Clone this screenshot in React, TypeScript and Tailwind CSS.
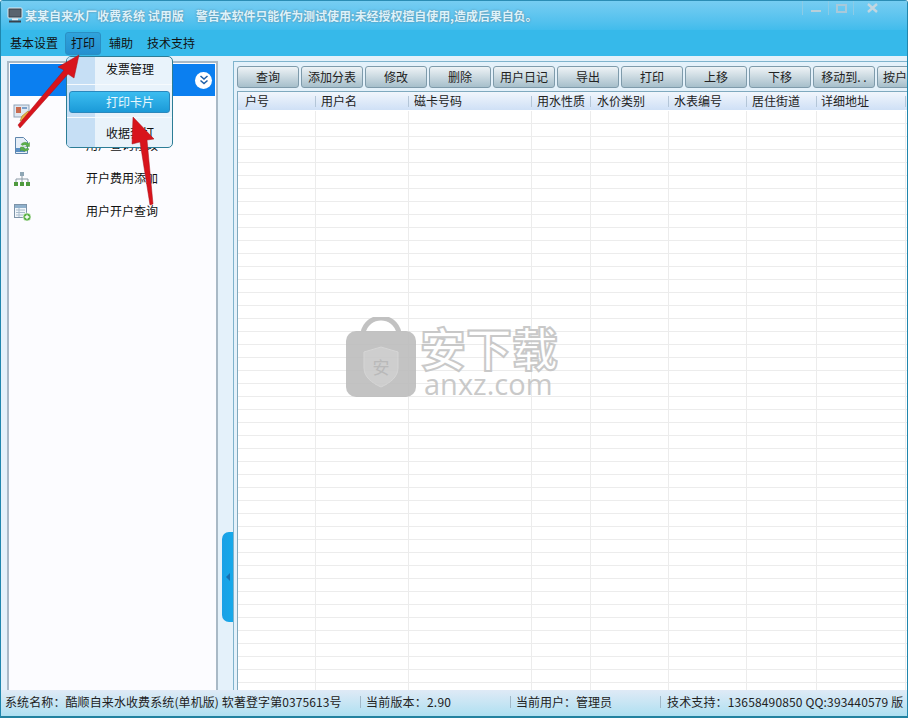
const font = { fontFamily: '"Noto Sans CJK SC", "Liberation Sans", sans-serif' };

const buttons = ["查询", "添加分表", "修改", "删除", "用户日记", "导出", "打印", "上移", "下移", "移动到. ."];
const cols = [
  { t: "户号", w: "w-[78px]", p: "pl-[7px]" },
  { t: "用户名", w: "w-[93px]", p: "pl-[5px]" },
  { t: "磁卡号码", w: "w-[123px]", p: "pl-[5px]" },
  { t: "用水性质", w: "w-[59px]", p: "pl-[5px]" },
  { t: "水价类别", w: "w-[78px]", p: "pl-[6px]" },
  { t: "水表编号", w: "w-[78px]", p: "pl-[5px]" },
  { t: "居住街道", w: "w-[70px]", p: "pl-[5px]" },
  { t: "详细地址", w: "w-[89px]", p: "pl-[4px]" },
];
const rows = Array.from({ length: 45 }, (_, i) => i);

function Icon1() {
  return (
    <svg width="20" height="20" viewBox="0 0 20 20">
      <rect x="2" y="2" width="15" height="12" fill="#dfe8f2" stroke="#8fa3b8" />
      <rect x="4" y="4" width="5" height="6" fill="#c96b4f" />
      <rect x="10" y="4" width="5" height="2" fill="#7da0c8" />
      <path d="M8 18l2-5 6-5 2 2-6 6z" fill="#e8b54a" stroke="#a57a24" strokeWidth="0.6" />
    </svg>
  );
}
function Icon2() {
  return (
    <svg width="20" height="20" viewBox="0 0 20 20">
      <path d="M3.500 1.500h8l4 4v12h-12z" fill="#e6eef7" stroke="#5f86ad" />
      <rect x="4" y="12" width="9" height="4" fill="#5a8fc4" />
      <path d="M9 8.500a4 3 0 0 1 7-1l1.500-1v4h-4l1.200-1a2.500 2 0 0 0-4 0z" fill="#5cb04a" stroke="#3d8a32" strokeWidth="0.4" />
      <path d="M17 13a4 3 0 0 1-7 1l-1.500 1v-4h4l-1.200 1a2.500 2 0 0 0 4 0z" fill="#5cb04a" stroke="#3d8a32" strokeWidth="0.4" />
    </svg>
  );
}
function Icon3() {
  return (
    <svg width="18" height="16" viewBox="0 0 18 16">
      <rect x="7" y="1" width="4" height="4" fill="#8fa6b5" />
      <path d="M9 5v3M3 11V8h12v3M9 8v3" fill="none" stroke="#8a9aa5" />
      <rect x="1" y="11" width="4" height="4" fill="#4f9a3e" />
      <rect x="7" y="11" width="4" height="4" fill="#4f9a3e" />
      <rect x="13" y="11" width="4" height="4" fill="#4f9a3e" />
    </svg>
  );
}
function Icon4() {
  return (
    <svg width="20" height="20" viewBox="0 0 20 20">
      <rect x="2.500" y="2.500" width="12" height="13" fill="#f2f6fa" stroke="#7d93a8" />
      <rect x="3" y="3" width="11" height="3" fill="#8fb0cc" />
      <path d="M4 8h9M4 10.500h9M4 13h9M7 6v9" stroke="#a9bccd" />
      <circle cx="15" cy="15" r="4" fill="#57b043" stroke="#fff" strokeWidth="0.6" />
      <path d="M15 12.800v4.400M12.800 15h4.400" stroke="#fff" strokeWidth="1.300" />
    </svg>
  );
}

function SideRow({ icon, text }: { icon: React.ReactNode; text: string }) {
  return (
    <div className="flex h-[33px] items-center">
      <div className="flex w-[24px] justify-center">{icon}</div>
      <span className="mb-[2px] ml-[52px] text-[12px] leading-none text-[#111]">{text}</span>
    </div>
  );
}

export default function App() {
  return (
    <div style={font} className="relative flex h-[718px] w-[908px] flex-col overflow-hidden rounded-t-[3px] border-x border-b-2 border-t border-x-[#1f86ad] border-b-[#22829f] border-t-[#2b8db5] bg-[#e4f1fa]">
      {/* title bar */}
      <div className="flex h-[29px] shrink-0 items-start justify-between bg-gradient-to-b from-[#76cdf2] to-[#41bcec]">
        <div className="flex items-center pl-[6px] pt-[6px]">
          <svg width="16" height="17" viewBox="0 0 16 17">
            <rect x="1" y="1" width="14" height="10" rx="1" fill="#39424c" stroke="#dfe8ee" />
            <rect x="2.500" y="2.500" width="11" height="7" fill="#59636e" />
            <rect x="5" y="11.500" width="6" height="2" fill="#e8edf2" />
            <rect x="2" y="13.500" width="12" height="2" fill="#39424c" />
          </svg>
          <span className="ml-[2px] whitespace-pre text-[12px] font-bold leading-none text-[#dcf2fb] [text-shadow:0_0_2px_#5a7d92]">
            某某自来水厂收费系统 试用版
          </span>
          <span className="ml-[12px] whitespace-pre text-[12px] font-bold leading-none tracking-[-0.07px] text-[#dcf2fb] [text-shadow:0_0_2px_#5a7d92]">
            警告本软件只能作为测试使用:未经授权擅自使用,造成后果自负。
          </span>
        </div>
        <div className="mr-[16px] flex h-[14px] items-center">
          <div className="flex h-full w-[26px] items-center justify-center border-l border-[#8ccbe6]">
            <div className="mt-[6px] h-[2px] w-[10px] bg-[#b9cfda]" />
          </div>
          <div className="flex h-full w-[25px] items-center justify-center border-l border-[#8ccbe6]">
            <div className="h-[9px] w-[11px] border-2 border-[#a8c9da]" />
          </div>
          <div className="flex h-full w-[38px] items-center justify-center border-l border-[#8ccbe6]">
            <svg width="11" height="10" viewBox="0 0 11 10">
              <path d="M1 1l9 8M10 1l-9 8" stroke="#c2d6e0" strokeWidth="2.400" />
            </svg>
          </div>
        </div>
      </div>

      {/* menu */}
      <div className="flex h-[26px] shrink-0 items-center bg-[#36b9ea] pl-[3px] text-[12px] leading-none text-[#111]">
        <span className="px-[6px]">基本设置</span>
        <span className="ml-[1px] flex h-[23px] w-[36px] items-center justify-center rounded-[3px] border border-[#2a8fc4] bg-gradient-to-b from-[#2fa3dc] to-[#2590d0]">打印</span>
        <span className="ml-[8px]">辅助</span>
        <span className="ml-[14px]">技术支持</span>
      </div>

      {/* body */}
      <div className="flex min-h-0 flex-1 pt-[5px]">
        {/* left panel */}
        <div className="ml-[6px] flex w-[211px] shrink-0 flex-col border-x-2 border-t-2 border-[#a9b9c6] bg-[#fcfcff] p-[1px] pb-0">
          <div className="flex h-[32px] shrink-0 items-center justify-end bg-[#0b7ff0] pr-[3px]">
            <div className="flex h-[17px] w-[17px] items-center justify-center rounded-full bg-white">
              <svg width="10" height="10" viewBox="0 0 10 10">
                <path d="M1.500 1l3.500 3 3.500-3M1.500 5.500l3.500 3 3.500-3" fill="none" stroke="#1d5fa8" strokeWidth="1.500" />
              </svg>
            </div>
          </div>
          <SideRow icon={<Icon1 />} text="用户开户添加" />
          <SideRow icon={<Icon2 />} text="用户查询修改" />
          <SideRow icon={<Icon3 />} text="开户费用添加" />
          <SideRow icon={<Icon4 />} text="用户开户查询" />
        </div>

        {/* splitter */}
        <div className="w-[15px] shrink-0 pl-[4px] pt-[471px]">
          <div className="flex h-[90px] w-[11px] items-center justify-center rounded-l-[7px] bg-gradient-to-r from-[#1ba0e6] to-[#16a9ea]">
            <div className="h-0 w-0 border-y-[4px] border-r-[4px] border-y-transparent border-r-[#1a6fb0]" />
          </div>
        </div>

        {/* right panel */}
        <div className="flex min-w-0 flex-1 flex-col overflow-hidden border-l border-t border-[#7fb3cc] pl-[3px] pt-[4px]">
          <div className="flex shrink-0 gap-[2px]">
            {buttons.map((b) => (
              <div key={b} className="flex h-[22px] w-[62px] shrink-0 items-center justify-center rounded-[3px] border border-[#7f9bab] bg-gradient-to-b from-[#eef3f6] to-[#a7bfcb] text-[12px] leading-none text-[#222]">
                {b}
              </div>
            ))}
            <div className="flex h-[22px] w-[62px] shrink-0 items-center justify-start rounded-[3px] border border-[#7f9bab] bg-gradient-to-b from-[#eef3f6] to-[#a7bfcb] pl-[5px] text-[12px] leading-none text-[#222]">
              按户
            </div>
          </div>
          <div className="mt-[3px] flex min-h-0 flex-1 flex-col overflow-hidden border-l border-t border-[#7fa9be] bg-white">
            <div className="mb-[1px] flex h-[18px] shrink-0 bg-gradient-to-b from-[#f1f6fc] to-[#cfe0f6]">
              {cols.map((c) => (
                <div key={c.t} className={`${c.w} ${c.p} relative flex shrink-0 items-center text-[12px] leading-none text-[#222]`}>
                  {c.t}
                  <span className="absolute right-0 top-[4px] h-[11px] w-px bg-[#b4c6d8]" />
                </div>
              ))}
            </div>
            {rows.map((r) => (
              <div key={r} className="flex h-[13px] shrink-0 border-b border-[#ececec]">
                {cols.map((c) => (
                  <div key={c.t} className={`${c.w} shrink-0 border-r border-[#ececec]`} />
                ))}
              </div>
            ))}
          </div>
        </div>
      </div>

      {/* status bar */}
      <div className="flex h-[26px] shrink-0 items-center whitespace-nowrap bg-gradient-to-b from-[#dfeaf6] to-[#aee0f1] pb-[2px] text-[12px] leading-none text-[#222]">
        <div className="w-[359px] shrink-0 pl-[4px] tracking-[0.1px]">系统名称：酷顺自来水收费系统(单机版) 软著登字第0375613号</div>
        <div className="h-[12px] w-px bg-[#9fb8c8]" />
        <div className="w-[149px] shrink-0 pl-[5px] tracking-[0.2px]">当前版本：2.90</div>
        <div className="h-[12px] w-px bg-[#9fb8c8]" />
        <div className="w-[149px] shrink-0 pl-[5px]">当前用户：管理员</div>
        <div className="h-[12px] w-px bg-[#9fb8c8]" />
        <div className="pl-[6px] tracking-[0.15px]">技术支持：13658490850 QQ:393440579 版</div>
      </div>

      {/* dropdown menu */}
      <div className="absolute left-[65px] top-[55px] flex h-[92px] w-[107px] overflow-hidden rounded-[5px] border border-[#2c7d96] bg-[#e9f3fb] text-[12px] leading-none text-[#111]">
        <div className="absolute inset-y-0 left-0 w-[28px] bg-[#c6dff5]" />
        <div className="relative flex w-full flex-col">
          <div className="flex h-[28px] items-center border-b border-[#f6fafd] pb-[4px] pl-[39px]">发票管理</div>
          <div className="flex h-[33px] items-center border-b border-[#f6fafd]">
            <div className="mx-[2px] mt-[1px] flex h-[22px] flex-1 items-center rounded-[3px] border border-[#2a88bd] bg-gradient-to-b from-[#3bbdf0] to-[#1a9ad8] pl-[36px] text-[#e8f7fd]">打印卡片</div>
          </div>
          <div className="flex flex-1 items-center pl-[39px]">收据套打</div>
        </div>
      </div>

      {/* watermark */}
      <div className="pointer-events-none absolute left-[345px] top-[316px] flex opacity-90">
        <svg width="70" height="80" viewBox="0 0 70 80">
          <path d="M17 16C19 6 27 1 35 1s16 5 18 15" fill="none" stroke="#bcbcbc" strokeWidth="5" />
          <rect x="0" y="14" width="70" height="66" rx="10" fill="#bdbdbd" />
          <path d="M35 30l17 5v16c0 9-8 15-17 19-9-4-17-10-17-19V35z" fill="#c9c9c9" stroke="#d2d2d2" />
          <text x="35" y="57" textAnchor="middle" fontSize="17" fill="#b2b2b2">安</text>
        </svg>
        <div className="ml-[4px] flex flex-col">
          <div className="mt-[2px] text-[46px] font-bold leading-[54px] text-white [-webkit-text-stroke:2px_#c4c4c4]">安下载</div>
          <div style={{ fontFamily: '"Open Sans", sans-serif' }} className="ml-[4px] mt-[-2px] text-[29px] leading-[26px] text-[#c4c4c4]">anxz.com</div>
        </div>
      </div>

      {/* annotation arrows */}
      <svg className="pointer-events-none absolute inset-0" width="908" height="718" viewBox="0 0 908 718">
        <path d="M17 124L19 127L67 73L73 77L78 54L57 66L63 69Z" fill="#d8141c" stroke="#a81018" strokeWidth="0.5" />
        <path d="M149 204L152 203L146 139L153 138L132 116L131 143L139 141Z" fill="#d8141c" stroke="#a81018" strokeWidth="0.5" />
      </svg>
    </div>
  );
}
